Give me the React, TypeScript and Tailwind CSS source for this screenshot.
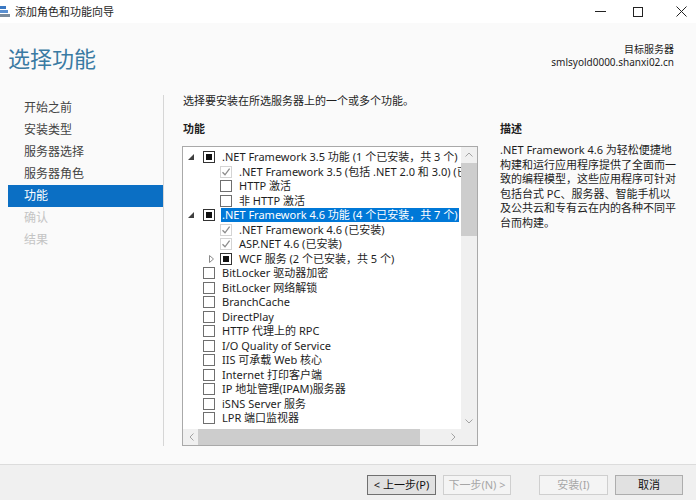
import React from 'react';

type Row = {
  level: number;
  expander?: 'open' | 'closed';
  state: 'mixed' | 'checked' | 'empty';
  label: string;
  selected?: boolean;
};

const rows: Row[] = [
  { level: 0, expander: 'open', state: 'mixed', label: '.NET Framework 3.5 功能 (1 个已安装，共 3 个)' },
  { level: 1, state: 'checked', label: '.NET Framework 3.5 (包括 .NET 2.0 和 3.0) (已安装)' },
  { level: 1, state: 'empty', label: 'HTTP 激活' },
  { level: 1, state: 'empty', label: '非 HTTP 激活' },
  { level: 0, expander: 'open', state: 'mixed', label: '.NET Framework 4.6 功能 (4 个已安装，共 7 个)', selected: true },
  { level: 1, state: 'checked', label: '.NET Framework 4.6 (已安装)' },
  { level: 1, state: 'checked', label: 'ASP.NET 4.6 (已安装)' },
  { level: 1, expander: 'closed', state: 'mixed', label: 'WCF 服务 (2 个已安装，共 5 个)' },
  { level: 0, state: 'empty', label: 'BitLocker 驱动器加密' },
  { level: 0, state: 'empty', label: 'BitLocker 网络解锁' },
  { level: 0, state: 'empty', label: 'BranchCache' },
  { level: 0, state: 'empty', label: 'DirectPlay' },
  { level: 0, state: 'empty', label: 'HTTP 代理上的 RPC' },
  { level: 0, state: 'empty', label: 'I/O Quality of Service' },
  { level: 0, state: 'empty', label: 'IIS 可承载 Web 核心' },
  { level: 0, state: 'empty', label: 'Internet 打印客户端' },
  { level: 0, state: 'empty', label: 'IP 地址管理(IPAM)服务器' },
  { level: 0, state: 'empty', label: 'iSNS Server 服务' },
  { level: 0, state: 'empty', label: 'LPR 端口监视器' },
];

const navItems = [
  { label: '开始之前', state: 'done' },
  { label: '安装类型', state: 'done' },
  { label: '服务器选择', state: 'done' },
  { label: '服务器角色', state: 'done' },
  { label: '功能', state: 'active' },
  { label: '确认', state: 'off' },
  { label: '结果', state: 'off' },
];

const descLines = [
  '.NET Framework 4.6 为轻松便捷地',
  '构建和运行应用程序提供了全面而一',
  '致的编程模型，这些应用程序可针对',
  '包括台式 PC、服务器、智能手机以',
  '及公共云和专有云在内的各种不同平',
  '台而构建。',
];

const Checkbox = ({ state }: { state: Row['state'] }) => {
  if (state === 'mixed') {
    return (
      <div className="w-[12px] h-[12px] border border-[#333] bg-white flex items-center justify-center shrink-0">
        <div className="w-[6px] h-[6px] bg-[#111]" />
      </div>
    );
  }
  if (state === 'checked') {
    return (
      <div className="w-[12px] h-[12px] border border-[#d4d4d4] bg-white flex items-center justify-center shrink-0">
        <svg width="10" height="10" viewBox="0 0 10 10">
          <path d="M1.5 5.2 L4 7.8 L8.6 1.6" fill="none" stroke="#8c8c8c" strokeWidth="1.3" />
        </svg>
      </div>
    );
  }
  return <div className="w-[12px] h-[12px] border border-[#6f6f6f] bg-white shrink-0" />;
};

const Expander = ({ kind }: { kind?: Row['expander'] }) => (
  <div className="w-[20px] h-full flex items-center pl-[5px] shrink-0">
    {kind === 'open' && (
      <svg width="6" height="6" viewBox="0 0 6 6">
        <polygon points="6,0 6,6 0,6" fill="#404040" />
      </svg>
    )}
    {kind === 'closed' && (
      <svg width="5" height="8" viewBox="0 0 5 8" className="ml-[4px]">
        <polygon points="0.5,0.5 4.5,4 0.5,7.5" fill="none" stroke="#8a8a8a" strokeWidth="1" />
      </svg>
    )}
  </div>
);

export default function App() {
  return (
    <div className="w-[696px] h-[500px] flex flex-col overflow-hidden bg-white text-[#1e1e1e] font-['Noto_Sans','Noto_Sans_CJK_SC',sans-serif]">
      {/* title bar */}
      <div className="h-[23px] flex items-center bg-white shrink-0">
        <svg width="10" height="11" viewBox="0 0 10 11">
          <rect x="0" y="0" width="6" height="3" fill="#3b78c2" />
          <rect x="0" y="4" width="8" height="3" fill="#5a8fd0" />
          <rect x="0" y="8" width="10" height="3" fill="#7a8a9a" />
        </svg>
        <span className="ml-[5px] text-[11px] leading-none">添加角色和功能向导</span>
        <div className="ml-auto flex items-center pr-[9px]">
          <div className="w-[11px] h-px bg-[#222]" />
          <div className="ml-[27px] w-[10px] h-[10px] border border-[#222]" />
          <svg width="11" height="11" viewBox="0 0 11 11" className="ml-[33px]">
            <path d="M0.5 0.5 L10.5 10.5 M10.5 0.5 L0.5 10.5" stroke="#222" strokeWidth="1" />
          </svg>
        </div>
      </div>

      <div className="flex-1 flex flex-col bg-[#fafafa]">
        {/* header */}
        <div className="h-[67px] flex items-start shrink-0">
          <div className="pl-[8px] pt-[24px] text-[22px] leading-none text-[#3a7ba3]">选择功能</div>
          <div className="ml-auto pr-[22px] pt-[20px] text-right text-[10px] leading-[13px] text-[#1e1e1e]">
            <div>目标服务器</div>
            <div>smlsyold0000.shanxi02.cn</div>
          </div>
        </div>

        {/* body */}
        <div className="flex-1 flex">
          <div className="w-[163px] pl-[8px] pt-[7px]">
            {navItems.map((n) => (
              <div
                key={n.label}
                className={`h-[22px] leading-[22px] pl-[16px] text-[12px] ${
                  n.state === 'active'
                    ? 'bg-[#0b6fc4] text-white'
                    : n.state === 'off'
                    ? 'text-[#c4c4c4]'
                    : 'text-[#444]'
                }`}
              >
                {n.label}
              </div>
            ))}
          </div>
          <div className="w-px bg-[#d6d6d6] mt-[5px] mb-[18px]" />

          <div className="flex pl-[18px]">
            <div className="w-[296px] flex flex-col">
              <div className="pt-[4px] pl-px text-[11px] leading-[14px]">选择要安装在所选服务器上的一个或多个功能。</div>
              <div className="pt-[14px] pl-px text-[11px] leading-[14px] font-bold">功能</div>

              <div className="mt-[10px] h-[300px] border border-[#a9a9a9] bg-white flex flex-col">
                <div className="flex-1 flex min-h-0">
                  <div className="flex-1 overflow-hidden pt-[3px]">
                    {rows.map((r, i) => (
                      <div
                        key={i}
                        className={`h-[14.5px] flex items-center whitespace-nowrap ${r.level === 1 ? 'pl-[17px]' : ''}`}
                      >
                        <Expander kind={r.expander} />
                        <Checkbox state={r.state} />
                        <span
                          className={`ml-[6px] pl-px pr-[2px] text-[11px] leading-[14px] ${
                            r.selected ? 'bg-[#0078d7] text-white' : ''
                          }`}
                        >
                          {r.label}
                        </span>
                      </div>
                    ))}
                  </div>
                  <div className="w-[16px] bg-[#f0f0f0] flex flex-col items-center">
                    <svg width="8" height="5" viewBox="0 0 8 5" className="mt-[5px]">
                      <path d="M0.5 4.5 L4 1 L7.5 4.5" fill="none" stroke="#a3a3a3" strokeWidth="1" />
                    </svg>
                    <div className="mt-[6px] w-[16px] h-[73px] bg-[#cdcdcd]" />
                    <svg width="8" height="5" viewBox="0 0 8 5" className="mt-auto mb-[5px]">
                      <path d="M0.5 0.5 L4 4 L7.5 0.5" fill="none" stroke="#a3a3a3" strokeWidth="1" />
                    </svg>
                  </div>
                </div>
                <div className="h-[16px] flex bg-[#f0f0f0]">
                  <div className="flex-1 flex items-center">
                    <svg width="5" height="8" viewBox="0 0 5 8" className="ml-[6px]">
                      <path d="M4.5 0.5 L1 4 L4.5 7.5" fill="none" stroke="#a3a3a3" strokeWidth="1" />
                    </svg>
                    <div className="ml-[4px] w-[222px] h-[16px] bg-[#cdcdcd]" />
                    <svg width="5" height="8" viewBox="0 0 5 8" className="ml-auto mr-[5px]">
                      <path d="M0.5 0.5 L4 4 L0.5 7.5" fill="none" stroke="#a3a3a3" strokeWidth="1" />
                    </svg>
                  </div>
                  <div className="w-[16px] bg-[#f0f0f0]" />
                </div>
              </div>
            </div>

            <div className="ml-[22px] w-[180px]">
              <div className="pt-[32px] text-[11px] leading-[14px] font-bold">描述</div>
              <div className="pt-[7px] text-[11px] leading-[14.5px]">
                {descLines.map((l) => (
                  <div key={l} className="whitespace-nowrap">{l}</div>
                ))}
              </div>
            </div>
          </div>
        </div>
      </div>

      {/* footer */}
      <div className="h-[36px] shrink-0 bg-[#f0f0f0] border-t border-[#dcdcdc] flex justify-end items-start pt-[10px] pr-[13px] text-[11px]">
        <button className="w-[69px] h-[20px] border border-[#707070] bg-[#e1e1e1] text-[#111] leading-[18px]">&lt; 上一步(P)</button>
        <button className="ml-[7px] w-[68px] h-[20px] border border-[#cfcfcf] bg-[#f4f4f4] text-[#a6a6a6] leading-[18px]">下一步(N) &gt;</button>
        <button className="ml-[28px] w-[69px] h-[20px] border border-[#cfcfcf] bg-[#f4f4f4] text-[#a6a6a6] leading-[18px]">安装(I)</button>
        <button className="ml-[7px] w-[68px] h-[20px] border border-[#adadad] bg-[#e1e1e1] text-[#111] leading-[18px]">取消</button>
      </div>
    </div>
  );
}
